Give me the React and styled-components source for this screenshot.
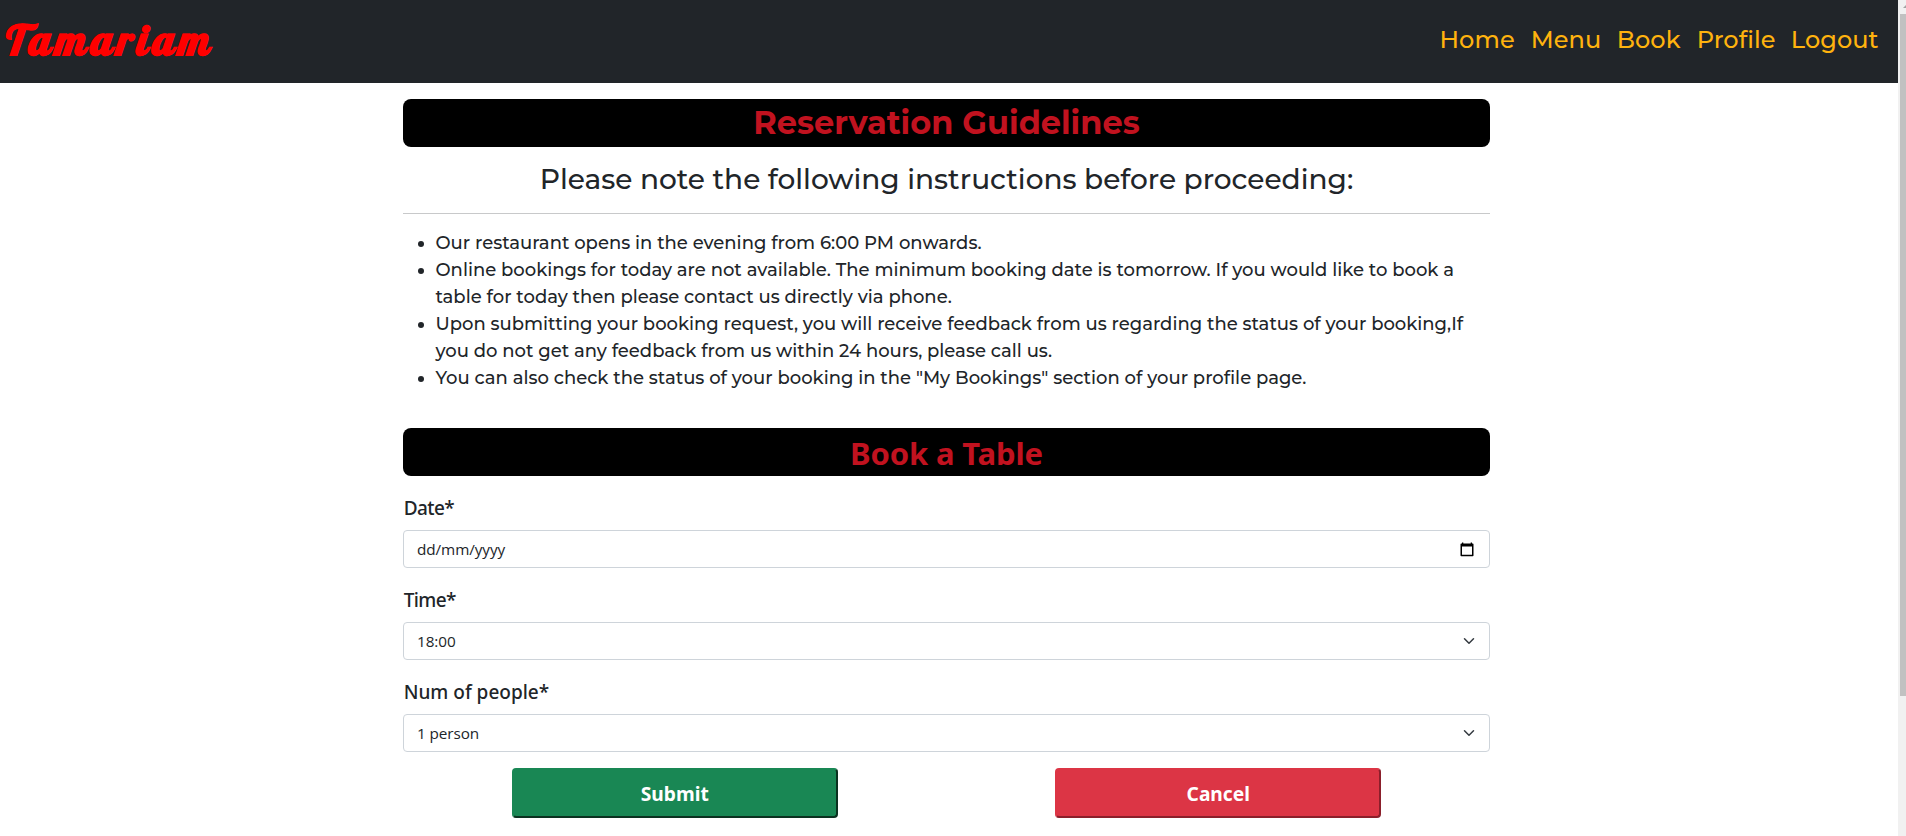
import React from "react";
import styled, { createGlobalStyle } from "styled-components";

const GlobalStyle = createGlobalStyle`
  * { box-sizing: border-box; }
  html, body { margin: 0; padding: 0; background: #fff; overflow: hidden; }
  body { color: #212529; font-family: "Noto Sans", "Open Sans", sans-serif; }
`;

const display = `"Montserrat", "Inter", sans-serif`;

const Window = styled.div`
  display: flex;
  height: 836px;
  overflow: hidden;
`;

const Page = styled.div`
  flex: 1;
  min-width: 0;
`;

const Navbar = styled.nav`
  display: flex;
  justify-content: space-between;
  align-items: flex-start;
  height: 83px;
  padding: 13px 14px 0 4px;
  background: #212529;
`;

const Brand = styled.a`
  font: bold 41px/53px "Lobster", "Liberation Serif", serif;
  letter-spacing: 4.6px;
  color: #f00;
  -webkit-text-stroke: 0.7px #f00;
  transform: skewX(-7deg);
  transform-origin: 0 42px;
`;

const NavLinks = styled.div`
  display: flex;
  padding-top: 12px;
`;

const NavLink = styled.a`
  width: ${(p) => p.$width}px;
  font: 500 24px/29px ${display};
  letter-spacing: 0.1px;
  color: #ffb30e;
  white-space: nowrap;
`;

const Container = styled.main`
  width: 1087px;
  margin: 0 0 0 403px;
  padding-top: 16px;
`;

const Banner = styled.h2`
  margin: 0;
  height: 48px;
  border-radius: 8px;
  background: #000;
  color: #c1121f;
  text-align: center;
  font: bold 32px/48px ${display};
`;

const FormBanner = styled(Banner)`
  margin-top: 36px;
  padding-top: 1px;
  font-family: "Segoe UI", "Noto Sans", sans-serif;
  font-size: 31px;
  letter-spacing: -0.15px;
`;

const Lead = styled.h3`
  margin: 15px 0 0;
  text-align: center;
  font: 500 28px/34px ${display};
`;

const Rule = styled.hr`
  margin: 17px 0 16px;
  border: 0;
  border-top: 1px solid #c8c9ca;
`;

const Guidelines = styled.ul`
  margin: 0;
  padding-left: 32.5px;
  font: 500 18px/27px ${display};
`;

const Field = styled.div`
  margin-top: 19px;
`;

const Label = styled.label`
  display: block;
  height: 24px;
  margin: 0 0 11px;
  padding: 1px 0 0 0.7px;
  font-size: 19px;
  line-height: 24px;
  font-weight: 500;
  letter-spacing: ${(p) => p.$tracking}px;
`;

const Control = styled.div`
  display: flex;
  justify-content: space-between;
  align-items: center;
  height: 38px;
  padding: 0 ${(p) => p.$inset}px 0 13px;
  border: 1px solid #ced4da;
  border-radius: 4px;
  font: 400 15.3px/36px "Segoe UI", "Open Sans", sans-serif;
  letter-spacing: -0.08px;
`;

const Actions = styled.div`
  display: grid;
  grid-template-columns: 1fr 1fr;
  justify-items: center;
  margin-top: 16px;
`;

const Button = styled.button`
  width: 326px;
  height: 50px;
  padding: 1px 0 0;
  border: 2px solid;
  border-color: ${(p) => `${p.$fill} ${p.$edge} ${p.$edge} ${p.$fill}`};
  border-radius: 4px;
  background: ${(p) => p.$fill};
  color: #fff;
  font: bold 19.2px/45px "Segoe UI", "Noto Sans", sans-serif;
`;

const ScrollTrack = styled.div`
  width: 8px;
  padding-left: 2px;
  background: #f1f1f1;
`;

const ScrollArrow = styled.svg`
  display: block;
  width: 6px;
  height: 14px;
`;

const ScrollThumb = styled.div`
  height: 682px;
  background: #c1c1c1;
`;

const links = [
  ["Home", 91.2],
  ["Menu", 86],
  ["Book", 80],
  ["Profile", 94],
  ["Logout", 93.3],
];

const guidelines = [
  "Our restaurant opens in the evening from 6:00 PM onwards.",
  "Online bookings for today are not available. The minimum booking date is tomorrow. If you would like to book a table for today then please contact us directly via phone.",
  "Upon submitting your booking request, you will receive feedback from us regarding the status of your booking,If you do not get any feedback from us within 24 hours, please call us.",
  'You can also check the status of your booking in the "My Bookings" section of your profile page.',
];

const CalendarIcon = () => (
  <svg width="14" height="15" viewBox="0 0 14 15">
    <path d="M2 .5h1.3v1h7.4v-1H12v1h.7q.8 0 .8.8v11.2q0 .8-.8.8H1.3q-.8 0-.8-.8V2.3q0-.8.8-.8H2zM2 4.6v8.2h10V4.6z" fill="#000" fillRule="evenodd" />
  </svg>
);

const ChevronIcon = () => (
  <svg width="12" height="12" viewBox="0 0 16 16">
    <path d="M2 5l6 6 6-6" fill="none" stroke="#343a40" strokeWidth="2" strokeLinecap="round" strokeLinejoin="round" />
  </svg>
);

export default function App() {
  return (
    <Window>
      <GlobalStyle />
      <Page>
        <Navbar>
          <Brand>Tamariam</Brand>
          <NavLinks>
            {links.map(([text, width]) => (
              <NavLink key={text} $width={width}>{text}</NavLink>
            ))}
          </NavLinks>
        </Navbar>
        <Container>
          <Banner>Reservation Guidelines</Banner>
          <Lead>Please note the following instructions before proceeding:</Lead>
          <Rule />
          <Guidelines>
            {guidelines.map((text) => (
              <li key={text}>{text}</li>
            ))}
          </Guidelines>
          <FormBanner>Book a Table</FormBanner>
          <Field>
            <Label $tracking={-0.6}>Date*</Label>
            <Control $inset={15}>dd/mm/yyyy<CalendarIcon /></Control>
          </Field>
          <Field>
            <Label $tracking={-0.6}>Time*</Label>
            <Control $inset={14}>18:00<ChevronIcon /></Control>
          </Field>
          <Field>
            <Label $tracking={0}>Num of people*</Label>
            <Control $inset={14}>1 person<ChevronIcon /></Control>
          </Field>
          <Actions>
            <Button $fill="#198754" $edge="#0b3220">Submit</Button>
            <Button $fill="#dc3545" $edge="#8b1f2b">Cancel</Button>
          </Actions>
        </Container>
      </Page>
      <ScrollTrack>
        <ScrollArrow viewBox="0 0 6 14">
          <path d="M3 8l4-4v4z" fill="#a3a3a3" />
        </ScrollArrow>
        <ScrollThumb />
      </ScrollTrack>
    </Window>
  );
}
